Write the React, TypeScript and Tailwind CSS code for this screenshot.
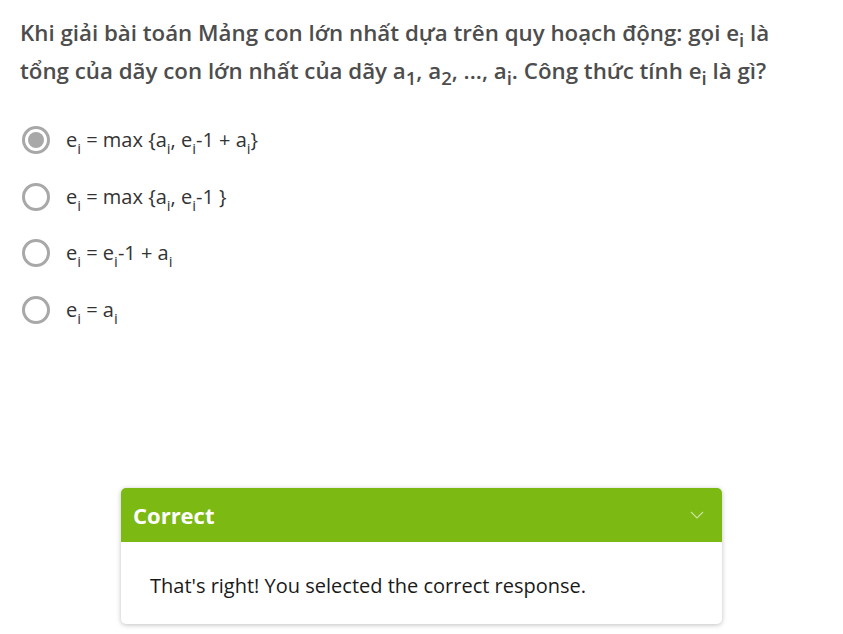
import React from "react";

const Sub = ({ c, big }: { c: string; big?: boolean }) => (
  <sub
    className={big ? "text-[0.83em] relative top-[0.05em]" : "text-[0.75em] relative top-[0.12em]"}
    style={{ verticalAlign: "sub", lineHeight: 0 }}
  >
    {c}
  </sub>
);

const Radio = ({ checked }: { checked?: boolean }) => (
  <span className="w-[28px] h-[28px] rounded-full border-[3px] border-[#a8a8a8] flex items-center justify-center shrink-0 bg-white">
    {checked && <span className="w-[16px] h-[16px] rounded-full bg-[#a8a8a8]" />}
  </span>
);

export default function App() {
  const options: React.ReactNode[] = [
    <>e<Sub c="i" /> = max {"{"}a<Sub c="i" />, e<Sub c="i" />-1 + a<Sub c="i" />{"}"}</>,
    <>e<Sub c="i" /> = max {"{"}a<Sub c="i" />, e<Sub c="i" />-1 {"}"}</>,
    <>e<Sub c="i" /> = e<Sub c="i" />-1 + a<Sub c="i" /></>,
    <>e<Sub c="i" /> = a<Sub c="i" /></>,
  ];
  return (
    <div className="w-[843px] h-[634px] bg-white relative overflow-hidden" style={{ fontFamily: "'Open Sans', sans-serif" }}>
      <div className="pl-[20px] pt-[14px] pr-[40px]">
        <p className="text-[22.3px] leading-[38px] font-semibold text-[#4d4d4d]">
          Khi giải bài toán Mảng con lớn nhất dựa trên quy hoạch động: gọi e<Sub big c="i" /> là tổng của dãy con lớn nhất của dãy a<Sub big c="1" />, a<Sub big c="2" />, ..., a<Sub big c="i" />. Công thức tính e<Sub big c="i" /> là gì?
        </p>
        <div className="mt-[22px] flex flex-col">
          {options.map((o, i) => (
            <div key={i} className="flex items-center gap-[16px] pl-[2px] h-[56.5px]">
              <Radio checked={i === 0} />
              <span className="text-[20px] text-[#333333]">{o}</span>
            </div>
          ))}
        </div>
      </div>
      <div className="absolute left-[121px] top-[488px] w-[601px] rounded-[5px] bg-white shadow-[0_1px_5px_rgba(0,0,0,0.25)] overflow-hidden">
        <div className="h-[54px] bg-[#7cb913] flex items-center justify-between pl-[12px] pr-[18px]">
          <span className="text-white font-bold text-[22px]">Correct</span>
          <svg width="14" height="8" viewBox="0 0 14 8" fill="none">
            <path d="M1 1 L7 7 L13 1" stroke="rgba(255,255,255,0.6)" strokeWidth="1.2" />
          </svg>
        </div>
        <div className="h-[82px] flex items-center pl-[29px] pt-[6px] text-[20px] text-[#1a1a1a]">
          That's right! You selected the correct response.
        </div>
      </div>
    </div>
  );
}
